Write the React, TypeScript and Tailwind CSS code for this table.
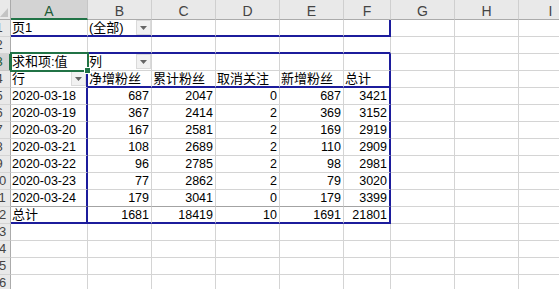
import clsx from 'clsx'

type Cell = {
  t?: string
  num?: boolean
  dd?: boolean
  bb?: 'blue' | 'dark'
  br?: boolean
  sel?: boolean
}

const COLS = ['A', 'B', 'C', 'D', 'E', 'F', 'G', 'H', 'I']

const data: [string, number, number, number, number, number][] = [
  ['2020-03-18', 687, 2047, 0, 687, 3421],
  ['2020-03-19', 367, 2414, 2, 369, 3152],
  ['2020-03-20', 167, 2581, 2, 169, 2919],
  ['2020-03-21', 108, 2689, 2, 110, 2909],
  ['2020-03-22', 96, 2785, 2, 98, 2981],
  ['2020-03-23', 77, 2862, 2, 79, 3020],
  ['2020-03-24', 179, 3041, 0, 179, 3399],
]

function buildRows(): Cell[][] {
  const empty = (): Cell[] => COLS.map(() => ({}))
  const rows: Cell[][] = []

  // page field
  const r1 = empty()
  r1[0] = { t: '页1' }
  r1[1] = { t: '(全部)', dd: true }
  for (let i = 0; i < 6; i++) r1[i].bb = 'blue'
  r1[5].br = true
  rows.push(r1)

  const r2 = empty()
  for (let i = 0; i < 6; i++) r2[i].bb = 'blue'
  rows.push(r2)

  const r3 = empty()
  r3[0] = { t: '求和项:值', sel: true }
  r3[1] = { t: '列', dd: true }
  r3[5].br = true
  rows.push(r3)

  const r4 = empty()
  r4[0] = { t: '行', dd: true, br: true }
  ;['净增粉丝', '累计粉丝', '取消关注', '新增粉丝', '总计'].forEach((t, i) => {
    r4[i + 1] = { t, bb: 'blue' }
  })
  r4[5].br = true
  rows.push(r4)

  data.forEach((d, idx) => {
    const r = empty()
    r[0] = { t: d[0], br: true }
    for (let i = 1; i < 6; i++) r[i] = { t: String(d[i]), num: true }
    r[5].br = true
    if (idx === data.length - 1) for (let i = 0; i < 6; i++) r[i].bb = 'dark'
    rows.push(r)
  })

  const total = empty()
  total[0] = { t: '总计', br: true }
  ;[1681, 18419, 10, 1691, 21801].forEach((n, i) => {
    total[i + 1] = { t: String(n), num: true }
  })
  for (let i = 0; i < 6; i++) total[i].bb = 'blue'
  total[5].br = true
  rows.push(total)

  for (let k = 0; k < 4; k++) rows.push(empty())
  return rows
}

function DropButton() {
  return (
    <div className="flex h-[15px] w-[15px] shrink-0 items-center justify-center border border-[#dadada] bg-[#f1f1f1]">
      <svg width="7" height="4" viewBox="0 0 7 4">
        <polygon points="0,0 7,0 3.5,4" fill="#666" />
      </svg>
    </div>
  )
}

function SheetCell({ c }: { c: Cell }) {
  const bottom =
    c.bb === 'blue'
      ? 'border-b-2 border-b-[#1c1c9c]'
      : c.bb === 'dark'
        ? 'border-b border-b-[#a3a3a3]'
        : 'border-b border-b-[#d4d4d4]'
  const right = c.br ? 'border-r-2 border-r-[#1c1c9c]' : 'border-r border-r-[#d4d4d4]'
  const cjk = /[^\x00-\x7f]/.test(c.t ?? '')

  return (
    <div className={clsx('relative flex h-[17px] items-start bg-white', bottom, right, c.sel && 'z-10')}>
      <span
        className={clsx(
          'flex-1 overflow-hidden whitespace-nowrap leading-[16px] text-black',
          cjk ? 'text-[13px]' : 'text-[12.5px]',
          c.num ? 'pr-[2px] text-right' : 'pl-[1px]'
        )}
      >
        {c.t}
      </span>
      {c.dd && <DropButton />}
      {c.sel && (
        <>
          <div className="pointer-events-none absolute left-[-1px] top-[-2px] h-[20px] w-[79px] border-2 border-[#217346]" />
          <div className="absolute left-[73px] top-[13px] h-[7px] w-[7px] border border-white bg-[#217346]" />
        </>
      )}
    </div>
  )
}

export default function App() {
  const rows = buildRows()

  return (
    <div
      className="h-[289px] w-[559px] overflow-hidden bg-white"
      style={{ fontFamily: '"Liberation Sans", "Noto Sans CJK SC", sans-serif' }}
    >
      <div className="grid w-max grid-cols-[11px_77px_64px_64px_64px_64px_47px_64px_64px_64px]">
        {/* header row */}
        <div className="relative h-[20px] border-b border-r border-[#ababab] bg-[#e9e9e9]">
          <svg className="absolute bottom-[2px] right-[2px]" width="8" height="9" viewBox="0 0 8 9">
            <polygon points="8,0 8,9 0,9" fill="#c4c4c4" />
          </svg>
        </div>
        {COLS.map((l, i) => (
          <div
            key={l}
            className={clsx(
              'h-[20px] pt-[2px] text-center text-[14px] leading-[18px]',
              i === 0
                ? 'border-b-2 border-r border-b-[#217346] border-r-[#c6c6c6] bg-[#d3d3d3] text-[#1e5b36]'
                : 'border-b border-r border-b-[#ababab] border-r-[#cfcfcf] bg-[#e9e9e9] text-[#444]'
            )}
          >
            {l}
          </div>
        ))}

        {rows.map((r, ri) => (
          <div key={ri} className="contents">
            <div
              className={clsx(
                'relative h-[17px] overflow-hidden border-b',
                ri === 2
                  ? 'border-r-2 border-b-[#c6c6c6] border-r-[#217346] bg-[#d3d3d3]'
                  : 'border-r border-b-[#d4d4d4] border-r-[#ababab] bg-[#e9e9e9]'
              )}
            >
              <div
                className={clsx(
                  'absolute left-[-13px] top-0 w-[24px] text-center text-[13px] leading-[16px]',
                  ri === 2 ? 'text-[#1e5b36]' : 'text-[#444]'
                )}
              >
                {ri + 1}
              </div>
            </div>
            {r.map((c, ci) => (
              <SheetCell key={ci} c={c} />
            ))}
          </div>
        ))}
      </div>
    </div>
  )
}
